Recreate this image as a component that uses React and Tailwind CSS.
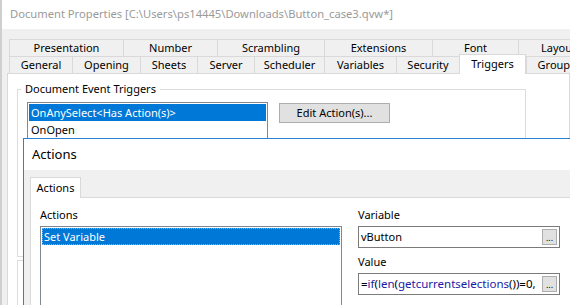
const row1 = [
  { label: 'Presentation', w: 'w-[114px]' },
  { label: 'Number', w: 'w-[94px]' },
  { label: 'Scrambling', w: 'w-[107px]' },
  { label: 'Extensions', w: 'w-[108px]' },
  { label: 'Font', w: 'w-[86px]' },
  { label: 'Layout', w: 'w-[80px]' },
];

const row2 = [
  { label: 'General', w: 'w-[63px]' },
  { label: 'Opening', w: 'w-[68px]' },
  { label: 'Sheets', w: 'w-[57px]' },
  { label: 'Server', w: 'w-[57px]' },
  { label: 'Scheduler', w: 'w-[70px]' },
  { label: 'Variables', w: 'w-[72px]' },
  { label: 'Security', w: 'w-[63px]' },
  { label: 'Triggers', w: 'w-[67px]', active: true },
  { label: 'Groups', w: 'w-[60px]' },
];

function Tab({ label, w, active }) {
  if (active) {
    return (
      <div className={`${w} relative z-10 -mt-[3px] h-[20px] shrink-0 bg-white border border-b-0 border-[#d9d9d9] flex items-start justify-center pt-[1px]`}>
        {label}
      </div>
    );
  }
  return (
    <div className={`${w} h-full shrink-0 bg-[#f0f0f0] border border-r-0 border-[#d9d9d9] flex items-center justify-center`}>
      {label}
    </div>
  );
}

function Dots() {
  return (
    <div className="w-[15px] h-[16px] bg-[#e1e1e1] border border-[#adadad] flex items-end justify-center text-[9px] leading-[10px] pb-[1px]">
      ...
    </div>
  );
}

function ActionsDialog() {
  return (
    <div className="absolute left-[21px] top-[138px] w-[600px] h-[200px] bg-[#f0f0f0] border border-[#2a82d4] z-20">
      <div className="h-[31px] bg-white flex items-center pl-[8px] text-[13px]">Actions</div>
      <div className="pt-[7px] pl-[6px]">
        <div className="w-[51px] h-[21px] bg-white border border-b-0 border-[#d9d9d9] flex items-center justify-center relative z-10">
          Actions
        </div>
        <div className="-mt-[1px] h-[120px] bg-white border border-[#d9d9d9] flex pl-[9px] pt-[9px] gap-[16px]">
          <div className="flex flex-col">
            <div className="h-[16px] leading-[16px]">Actions</div>
            <div className="mt-[3px] w-[302px] h-[100px] border border-[#828790] p-[1px]">
              <div className="h-[17px] bg-[#0078d7] text-white pl-[2px] leading-[17px] outline-dotted outline-1 outline-[#7fb6e8] -outline-offset-1">
                Set Variable
              </div>
            </div>
          </div>
          <div className="flex flex-col">
            <div className="h-[16px] leading-[16px]">Variable</div>
            <div className="mt-[3px] w-[202px] h-[22px] border border-[#7a7a7a] flex items-center justify-between pl-[2px] pr-[2px]">
              <span>vButton</span>
              <Dots />
            </div>
            <div className="mt-[6px] h-[16px] leading-[16px]">Value</div>
            <div className="mt-[3px] w-[202px] h-[22px] border border-[#7a7a7a] flex items-center justify-between pl-[2px] pr-[2px]">
              <span className="whitespace-nowrap overflow-hidden text-[11.5px]">
                <span>=</span>
                <span className="text-[#1a1aa6]">if</span>
                <span>(</span>
                <span className="text-[#1a1aa6]">len</span>
                <span>(</span>
                <span className="text-[#1a1aa6]">getcurrentselections</span>
                <span>())=0,</span>
              </span>
              <Dots />
            </div>
          </div>
        </div>
      </div>
    </div>
  );
}

export default function App() {
  return (
    <div className="w-[570px] h-[305px] relative overflow-hidden bg-white font-['Noto_Sans',sans-serif] text-[11px] text-black border-l-2 border-[#cfcfcf]">
      <div className="h-[29px] flex items-center pl-[8px] text-[11.2px] text-[#9a9a9a]">
        Document Properties [C:\Users\ps14445\Downloads\Button_case3.qvw*]
      </div>
      <div className="h-[276px] bg-[#f0f0f0] pl-[5px] pt-[10px] flex flex-col">
        <div className="flex h-[18px] pl-[2px]">
          {row1.map((t) => (
            <Tab key={t.label} {...t} />
          ))}
        </div>
        <div className="flex h-[18px] -mt-[1px] pl-[2px] items-end">
          {row2.map((t) => (
            <Tab key={t.label} {...t} />
          ))}
        </div>
        <div className="flex-1 bg-white border border-[#d9d9d9] -mt-[1px] pl-[9px] pt-[15px]">
          <div className="relative w-[509px] h-[168px] border border-[#dcdcdc] pl-[9px] pt-[12px] flex gap-[11px]">
            <div className="absolute -top-[9px] left-[3px] bg-white px-[4px] leading-[16px]">Document Event Triggers</div>
            <div className="w-[241px] h-[60px] border border-[#828790] p-[1px]">
              <div className="h-[17px] bg-[#0078d7] text-white pl-[2px] leading-[17px]">OnAnySelect&lt;Has Action(s)&gt;</div>
              <div className="h-[17px] pl-[2px] leading-[17px]">OnOpen</div>
            </div>
            <div className="w-[111px] h-[20px] mt-[1px] bg-[#e1e1e1] border border-[#adadad] flex items-center justify-center">
              Edit Action(s)...
            </div>
          </div>
          <div className="mt-[3px] w-[509px] h-[60px] border border-[#dcdcdc]" />
        </div>
      </div>
      <ActionsDialog />
    </div>
  );
}
